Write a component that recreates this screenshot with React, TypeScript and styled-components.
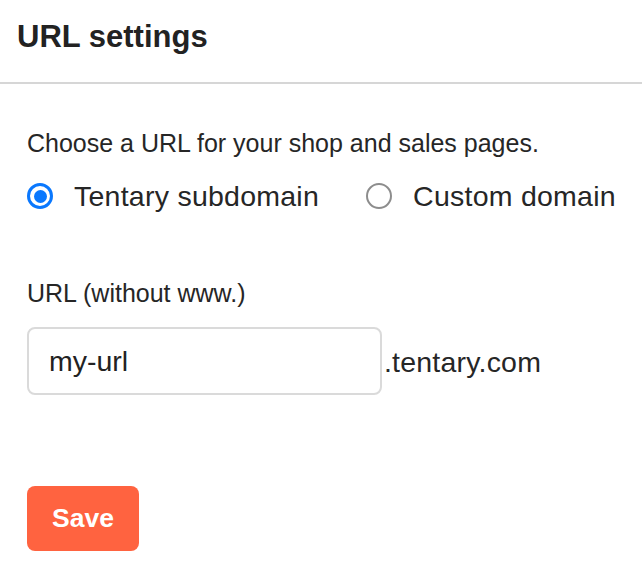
import React, { useState } from 'react';
import styled, { createGlobalStyle } from 'styled-components';

const GlobalStyle = createGlobalStyle`
  body {
    margin: 0;
    background: #fff;
    font-family: "Liberation Sans", Arial, sans-serif;
    color: #222;
  }
`;

const Page = styled.div`
  width: 642px;
`;

const Header = styled.div`
  padding: 17px 17px 25px;
  border-bottom: 2px solid #d6d6d6;
`;

const Title = styled.h1`
  margin: 0;
  font-size: 31px;
  line-height: 40px;
  font-weight: 700;
  color: #222;
`;

const Content = styled.div`
  padding: 44px 27px 0;
  display: flex;
  flex-direction: column;
  align-items: flex-start;
`;

const Text = styled.p`
  margin: 0;
  font-size: 25px;
  line-height: 30px;
  color: #262626;
`;

const RadioGroup = styled.div`
  display: flex;
  align-items: center;
  gap: 47px;
  margin-top: 21px;
`;

const RadioLabel = styled.label`
  display: flex;
  flex-shrink: 0;
  align-items: center;
  gap: 21px;
  font-size: 28.5px;
  line-height: 34px;
  letter-spacing: 0.25px;
  white-space: nowrap;
  color: #262626;
  cursor: pointer;
`;

const Circle = styled.span<{ $checked: boolean }>`
  box-sizing: border-box;
  width: 26px;
  height: 26px;
  border-radius: 50%;
  border: ${(p) => (p.$checked ? '3px solid #0a78fe' : '2px solid #8d8d8d')};
  background: #fff;
  display: flex;
  align-items: center;
  justify-content: center;

  &::after {
    content: '';
    width: 13px;
    height: 13px;
    border-radius: 50%;
    background: #0a78fe;
    display: ${(p) => (p.$checked ? 'block' : 'none')};
  }
`;

const FieldLabel = styled(Text)`
  margin-top: 65px;
`;

const InputRow = styled.div`
  display: flex;
  align-items: center;
  gap: 2px;
  margin-top: 19px;
`;

const Input = styled.input`
  box-sizing: border-box;
  width: 355px;
  height: 68px;
  border: 2px solid #dadada;
  border-radius: 8px;
  padding: 0 20px;
  font-family: inherit;
  font-size: 28.5px;
  color: #222;
  outline: none;
`;

const Suffix = styled.span`
  font-size: 28.5px;
  line-height: 34px;
  letter-spacing: 0.2px;
  color: #262626;
  padding-top: 2px;
`;

const SaveButton = styled.button`
  margin-top: 91px;
  width: 112px;
  height: 65px;
  border: none;
  border-radius: 8px;
  background: #ff6340;
  color: #fff;
  font-family: inherit;
  font-size: 26.5px;
  font-weight: 700;
  cursor: pointer;
`;

export default function App() {
  const [domain, setDomain] = useState<'sub' | 'custom'>('sub');
  const [url, setUrl] = useState('my-url');

  return (
    <Page>
      <GlobalStyle />
      <Header>
        <Title>URL settings</Title>
      </Header>
      <Content>
        <Text>Choose a URL for your shop and sales pages.</Text>
        <RadioGroup>
          <RadioLabel onClick={() => setDomain('sub')}>
            <Circle $checked={domain === 'sub'} />
            Tentary subdomain
          </RadioLabel>
          <RadioLabel onClick={() => setDomain('custom')}>
            <Circle $checked={domain === 'custom'} />
            Custom domain
          </RadioLabel>
        </RadioGroup>
        <FieldLabel>URL (without www.)</FieldLabel>
        <InputRow>
          <Input value={url} onChange={(e) => setUrl(e.target.value)} />
          <Suffix>.tentary.com</Suffix>
        </InputRow>
        <SaveButton>Save</SaveButton>
      </Content>
    </Page>
  );
}
